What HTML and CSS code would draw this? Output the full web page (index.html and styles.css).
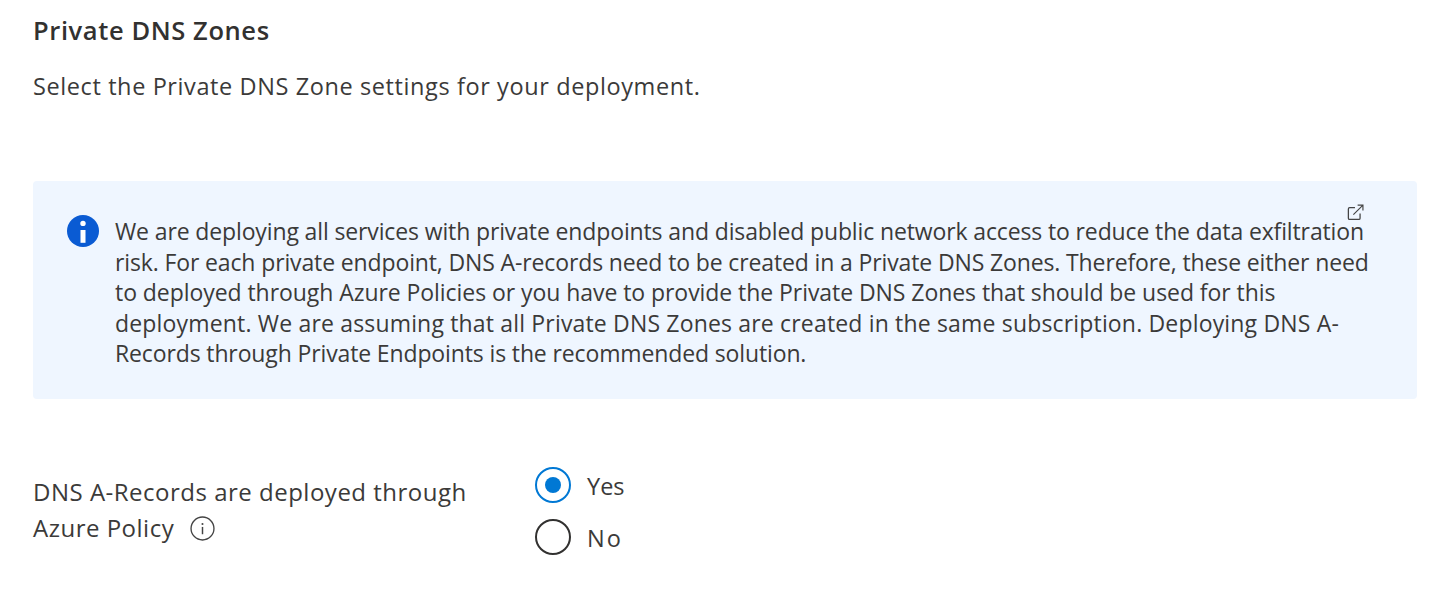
FILE: index.html
```html
<!DOCTYPE html>
<html lang="en">
<head>
    <meta charset="UTF-8">
    <title>Private DNS Zones</title>
    <link rel="stylesheet" href="styles.css">
</head>
<body>
    <h1 class="title">Private DNS Zones</h1>
    <p class="intro">Select the Private DNS Zone settings for your deployment.</p>

    <div class="info-box">
        <svg class="info-icon" viewBox="0 0 32 32">
            <circle cx="16" cy="16" r="16" fill="#0a5bd3"/>
            <circle cx="16" cy="8.4" r="2.7" fill="#fff"/>
            <rect x="13.5" y="15" width="5" height="12.8" fill="#fff"/>
        </svg>
        <div class="info-text">
            <svg class="link-icon" viewBox="0 0 16 16">
                <path d="M7.5 3.5H2.5a1.2 1.2 0 0 0-1.2 1.2v8.6a1.2 1.2 0 0 0 1.2 1.2h8.6a1.2 1.2 0 0 0 1.2-1.2V9" fill="none" stroke="#444" stroke-width="1.2"/>
                <path d="M6 10l9-9M10 1h5v5" fill="none" stroke="#444" stroke-width="1.1"/>
            </svg>
            We are deploying all services with private endpoints and disabled public network access to reduce the data exfiltration<br>
            risk. For each private endpoint, DNS A-records need to be created in a Private DNS Zones. Therefore, these either need<br>
            <span class="line-3">to deployed through Azure Policies or you have to provide the Private DNS Zones that should be used for this</span><br>
            <span class="line-4">deployment. We are assuming that all Private DNS Zones are created in the same subscription. Deploying DNS A-</span><br>
            Records through Private Endpoints is the recommended solution.
        </div>
    </div>

    <div class="field">
        <div class="field-label">
            DNS A-Records are deployed through<br>
            Azure Policy
            <svg class="help-icon" viewBox="0 0 24 24">
                <circle cx="12" cy="12" r="11" fill="none" stroke="#444" stroke-width="1.3"/>
                <rect x="11.3" y="10.5" width="1.4" height="7" fill="#444"/>
                <circle cx="12" cy="7.6" r="1" fill="#444"/>
            </svg>
        </div>
        <div class="radio-group">
            <label class="radio-row">
                <span class="radio radio-on"></span>
                <span class="radio-text">Yes</span>
            </label>
            <label class="radio-row">
                <span class="radio"></span>
                <span class="radio-text radio-no">No</span>
            </label>
        </div>
    </div>
</body>
</html>
```

FILE: styles.css
```css
* {
    margin: 0;
    padding: 0;
    box-sizing: border-box;
}

body {
    font-family: "Open Sans", "Noto Sans", Arial, sans-serif;
    font-size: 23.5px;
    color: #3b3a39;
    background: white;
    padding: 12px 13px 0 33px;
    overflow: hidden;
}

.title {
    font-size: 25.5px;
    font-weight: 600;
    line-height: 36px;
    letter-spacing: 0.6px;
    color: #323130;
}

.intro {
    margin-top: 20px;
    line-height: 36px;
    letter-spacing: 0.6px;
}

.info-box {
    position: relative;
    display: flex;
    gap: 16px;
    height: 218px;
    margin-top: 77px;
    padding: 34px 0 0 34px;
    background: #eff6ff;
    border-radius: 4px;
}

.info-icon {
    flex: none;
    width: 32px;
    height: 32px;
}

.info-text {
    position: relative;
    margin-top: 1px;
    font-size: 23px;
    line-height: 30.5px;
    letter-spacing: -0.13px;
    white-space: nowrap;
}

.line-3 {
    letter-spacing: -0.06px;
}

.line-4 {
    letter-spacing: 0.17px;
}

.link-icon {
    position: absolute;
    top: -12px;
    right: 5px;
    width: 17px;
    height: 17px;
}

.field {
    display: flex;
    margin-top: 68px;
}

.field-label {
    width: 502px;
    padding-top: 7px;
    font-size: 24px;
    line-height: 36px;
    letter-spacing: 0.5px;
}

.help-icon {
    width: 25px;
    height: 25px;
    margin-left: 9px;
    vertical-align: -4px;
}

.radio-group {
    display: flex;
    flex-direction: column;
    gap: 16px;
}

.radio-row {
    display: flex;
    align-items: center;
    gap: 16px;
    height: 36px;
}

.radio-text {
    margin-top: 2px;
}

.radio-no {
    letter-spacing: 2px;
}

.radio {
    width: 36px;
    height: 36px;
    border: 2px solid #323130;
    border-radius: 50%;
}

.radio-on {
    border-color: #0078d4;
    display: flex;
    align-items: center;
    justify-content: center;
}

.radio-on::after {
    content: "";
    width: 16px;
    height: 16px;
    background: #0078d4;
    border-radius: 50%;
}
```
